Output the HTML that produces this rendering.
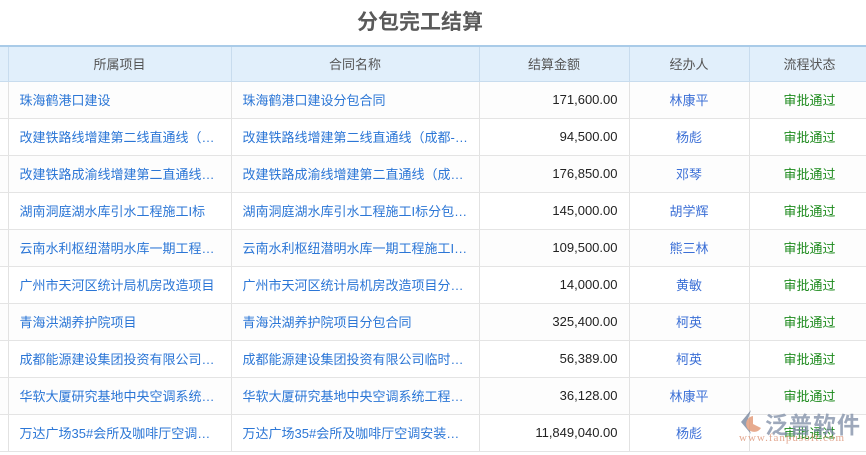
<!DOCTYPE html>
<html><head><meta charset="utf-8"><style>
*{margin:0;padding:0;box-sizing:border-box}
body{width:866px;height:455px;background:#fff;font-family:"Liberation Sans","Noto Sans CJK SC",sans-serif;position:relative;overflow:hidden}
h1{position:absolute;left:0;width:840px;top:6px;text-align:center;font-size:21px;font-weight:bold;color:#5a5a5a;font-family:"Liberation Sans","Noto Sans CJK SC",sans-serif}
table{position:absolute;left:0;top:45px;border-collapse:collapse;table-layout:fixed;width:870px}
td,th{font-size:13px;height:37px;border-right:1px solid #e2e2e2;border-bottom:1px solid #e4e4e4;white-space:nowrap;overflow:hidden;padding:0 11px}
th{background:#e1effb;color:#555;font-weight:normal;height:35px;border-top:2px solid #a9cbe8;border-bottom:1px solid #c8dcee;border-right:1px solid #c8dcee;text-align:center}
td{color:#2b76d6}
td.n{color:#222;text-align:right;padding-right:11px}
td.c{text-align:center;color:#3b6fd6}
td.s{text-align:center;color:#1d8a1d}
tr:nth-child(even) td{background:#fdfdfd}
</style></head><body>
<h1>分包完工结算</h1>
<table>
<colgroup><col style="width:8px"><col style="width:223px"><col style="width:248px"><col style="width:150px"><col style="width:120px"><col style="width:121px"></colgroup>
<tr><th style="padding:0"></th><th>所属项目</th><th>合同名称</th><th>结算金额</th><th>经办人</th><th>流程状态</th></tr>
<tr><td></td><td>珠海鹤港口建设</td><td>珠海鹤港口建设分包合同</td><td class="n">171,600.00</td><td class="c">林康平</td><td class="s">审批通过</td></tr>
<tr><td></td><td>改建铁路线增建第二线直通线（…</td><td>改建铁路线增建第二线直通线（成都-…</td><td class="n">94,500.00</td><td class="c">杨彪</td><td class="s">审批通过</td></tr>
<tr><td></td><td>改建铁路成渝线增建第二直通线…</td><td>改建铁路成渝线增建第二直通线（成…</td><td class="n">176,850.00</td><td class="c">邓琴</td><td class="s">审批通过</td></tr>
<tr><td></td><td>湖南洞庭湖水库引水工程施工I标</td><td>湖南洞庭湖水库引水工程施工I标分包…</td><td class="n">145,000.00</td><td class="c">胡学辉</td><td class="s">审批通过</td></tr>
<tr><td></td><td>云南水利枢纽潜明水库一期工程…</td><td>云南水利枢纽潜明水库一期工程施工I…</td><td class="n">109,500.00</td><td class="c">熊三林</td><td class="s">审批通过</td></tr>
<tr><td></td><td>广州市天河区统计局机房改造项目</td><td>广州市天河区统计局机房改造项目分…</td><td class="n">14,000.00</td><td class="c">黄敏</td><td class="s">审批通过</td></tr>
<tr><td></td><td>青海洪湖养护院项目</td><td>青海洪湖养护院项目分包合同</td><td class="n">325,400.00</td><td class="c">柯英</td><td class="s">审批通过</td></tr>
<tr><td></td><td>成都能源建设集团投资有限公司…</td><td>成都能源建设集团投资有限公司临时…</td><td class="n">56,389.00</td><td class="c">柯英</td><td class="s">审批通过</td></tr>
<tr><td></td><td>华软大厦研究基地中央空调系统…</td><td>华软大厦研究基地中央空调系统工程…</td><td class="n">36,128.00</td><td class="c">林康平</td><td class="s">审批通过</td></tr>
<tr><td></td><td>万达广场35#会所及咖啡厅空调…</td><td>万达广场35#会所及咖啡厅空调安装…</td><td class="n">11,849,040.00</td><td class="c">杨彪</td><td class="s">审批通过</td></tr>
</table>
<div style="position:absolute;left:737px;top:408px;opacity:.75">
<svg width="28" height="28" viewBox="0 0 28 28" style="position:absolute;left:0;top:0"><path d="M14 2 L4 14 L14 26 L10 14 Z" fill="#6f7f99"/><path d="M16 8 A8 8 0 1 0 24 20 L16 16 Z" fill="#e0906a"/></svg>
<div style="position:absolute;left:28px;top:-2px;font-size:23px;font-weight:bold;color:#7d8ca5;letter-spacing:1px;white-space:nowrap">泛普软件</div>
<div style="position:absolute;left:2px;top:24px;font-size:11px;color:#d98a6a;font-family:'Liberation Serif',serif;white-space:nowrap;letter-spacing:1px">www.fanpusoft.com</div>
</div>
</body></html>
